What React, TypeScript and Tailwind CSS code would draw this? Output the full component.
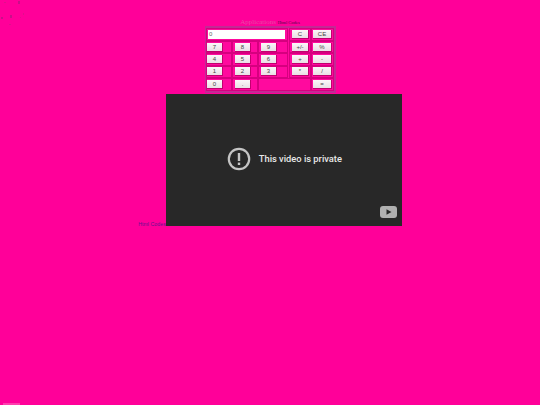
import React from 'react';

const ROWS: string[][] = [
  ['7', '8', '9', '+/-', '%'],
  ['4', '5', '6', '+', '-'],
  ['1', '2', '3', '*', '/'],
];

const Key = ({ label, w = 'w-[16px]' }: { label: string; w?: string }) => (
  <span className={`${w} h-[9px] bg-gradient-to-b from-[#fbf7f9] to-[#e9dfe5] border-r border-b border-[#c2006f] text-[6px] leading-[9px] text-center text-[#444] font-['Liberation_Sans',sans-serif]`}>
    {label}
  </span>
);

const Cell = ({ children, className = '' }: { children?: React.ReactNode; className?: string }) => (
  <div className={`flex items-center justify-start border border-[#d6007f] ${className}`}>{children}</div>
);

function Calculator() {
  return (
    <div className="w-[131px] h-[67px] ml-[205px] border-2 border-[#c22a94] bg-[#ff0a9e] flex flex-col -mt-[1px]">
      <div className="flex h-[13px] -ml-[1px]">
        <Cell className="w-[82px] pl-[1px]">
          <span className="w-[77px] h-[9px] bg-white text-[6px] leading-[9px] pl-[1px] text-left text-[#666] font-['Liberation_Sans',sans-serif]">0</span>
        </Cell>
        <div className="w-[1px]" />
        <Cell className="w-[22px] pl-[2px]"><Key label="C" w="w-[17px]" /></Cell>
        <Cell className="w-[23px] pl-[1px]"><Key label="CE" w="w-[19px]" /></Cell>
      </div>
      {ROWS.map((row) => (
        <div key={row[0]} className="flex h-[12.5px] -ml-[1px]">
          <Cell className="w-[26px]"><Key label={row[0]} /></Cell>
          <Cell className="w-[26px] pl-[2px]"><Key label={row[1]} /></Cell>
          <Cell className="w-[30px] pl-[2px]"><Key label={row[2]} /></Cell>
          <div className="w-[1px]" />
          <Cell className="w-[22px] pl-[2px]"><Key label={row[3]} w="w-[17px]" /></Cell>
          <Cell className="w-[23px] pl-[1px]"><Key label={row[4]} w="w-[19px]" /></Cell>
        </div>
      ))}
      <div className="flex h-[13px] -ml-[1px]">
        <Cell className="w-[26px]"><Key label="0" /></Cell>
        <Cell className="w-[26px] pl-[2px]"><Key label="." /></Cell>
        <Cell className="w-[53px]" />
        <Cell className="w-[23px] pl-[1px]"><Key label="=" w="w-[19px]" /></Cell>
      </div>
    </div>
  );
}

function Video() {
  return (
    <div className="relative inline-block align-bottom w-[236px] h-[132px] bg-[#282828] text-left">
      <div className="absolute left-[61px] top-[53px] flex items-center gap-[8px]">
        <svg width="24" height="24" viewBox="0 0 24 24" fill="none">
          <circle cx="12" cy="12" r="10.2" stroke="#c4c4c4" strokeWidth="2.2" />
          <rect x="10.8" y="6" width="2.4" height="8" fill="#c4c4c4" />
          <rect x="10.8" y="15.6" width="2.4" height="2.4" fill="#c4c4c4" />
        </svg>
        <span className="text-[9.3px] leading-[12px] font-medium text-[#e8e8e8] font-['Roboto',sans-serif]">This video is private</span>
      </div>
      <svg className="absolute left-[214px] top-[112px]" width="17" height="12" viewBox="0 0 17 12">
        <rect width="17" height="12" rx="3" fill="#b0b0b0" />
        <path d="M6.5 3.2 L11.5 6 L6.5 8.8 Z" fill="#282828" />
      </svg>
    </div>
  );
}

export default function App() {
  return (
    <div className="relative w-[540px] h-[405px] overflow-hidden bg-[#ff0099] font-['Liberation_Serif',serif]">
      {/* cursor trail, top left */}
      <svg className="absolute left-0 top-0" width="30" height="26" viewBox="0 0 30 26">
        <g fill="#c8108a">
          <rect x="18" y="1" width="2" height="3" />
          <rect x="10" y="15" width="2" height="3" />
          <rect x="1" y="17" width="2" height="2" />
        </g>
        <g fill="#e0108c">
          <rect x="23" y="13" width="1" height="2" />
          <rect x="20" y="17" width="1" height="1" />
          <rect x="9" y="24" width="2" height="1" />
          <rect x="4" y="2" width="2" height="1" />
        </g>
      </svg>

      <div className="pt-[18px] text-center">
        <div className="h-[9px] text-[7px] leading-[9px] whitespace-nowrap">
          <span className="text-[7px] text-[#e84aa6]">Applications</span>{' '}
          <span className="text-[4.6px] text-[#4a0a48]">Html Codes</span>
        </div>
        <Calculator />
        <div className="mt-[1px] whitespace-nowrap leading-none">
          <span className="relative top-[1px] text-[5.3px] leading-[6px] text-[#6a1090] font-medium font-['Liberation_Sans',sans-serif] align-bottom">Html Codes</span>
          <Video />
        </div>
      </div>

      <div className="absolute left-[3px] bottom-0 w-[17px] h-[2px] bg-[#ff3dae]" />
    </div>
  );
}
